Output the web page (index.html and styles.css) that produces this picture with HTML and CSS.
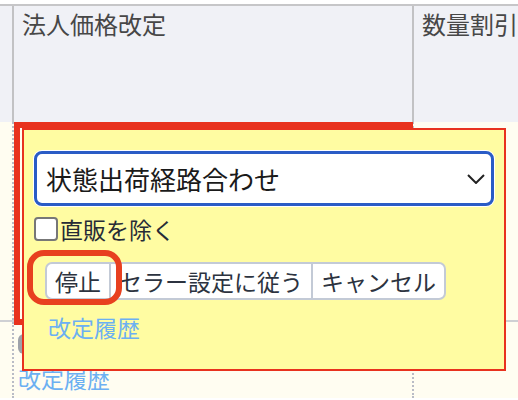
FILE: index.html
```html
<!DOCTYPE html>
<html lang="ja">
<head>
    <meta charset="UTF-8">
    <meta name="viewport" content="width=device-width, initial-scale=1.0">
    <title>法人価格改定</title>
    <link rel="stylesheet" href="styles.css">
</head>
<body>
    <div class="sheet">
        <div class="row head">
            <div class="cell gutter"></div>
            <div class="cell col-a">法人価格改定</div>
            <div class="cell col-b">数量割引</div>
        </div>
        <div class="row body first">
            <div class="cell gutter"></div>
            <div class="cell col-a"></div>
            <div class="cell col-b"></div>
        </div>
        <div class="row body last">
            <div class="cell gutter"></div>
            <div class="cell col-a">
                <span class="ghost-btn"></span>
                <a class="history under">改定履歴</a>
            </div>
            <div class="cell col-b"></div>
        </div>
    </div>

    <div class="mark-cell"></div>

    <div class="popup">
        <div class="picker">
            <span>状態出荷経路合わせ</span>
            <svg class="chevron" width="18" height="10" viewBox="0 0 18 10">
                <path d="M1 1 L9 9 L17 1" fill="none" stroke="#222" stroke-width="2"/>
            </svg>
        </div>
        <label class="check">
            <span class="box"></span>直販を除く
        </label>
        <div class="btn-group">
            <button class="btn first">停止<span class="mark-btn"></span></button>
            <button class="btn">セラー設定に従う</button>
            <button class="btn last">キャンセル</button>
        </div>
        <a class="history">改定履歴</a>
    </div>
</body>
</html>
```

FILE: styles.css
```css
body {
    margin: 0;
    background: #ffffff;
    font-family: "Noto Sans CJK JP", "Noto Sans", sans-serif;
    overflow: hidden;
}
.sheet {
    margin-top: 4px;
}
.row {
    display: grid;
    grid-template-columns: 12px 400px 1fr;
}
.head {
    height: 116px;
    background: #f0f1f6;
    border-top: 2px solid #c6c6c8;
}
.head .col-a, .head .col-b {
    border-left: 2px solid #c2c2c4;
    padding: 2px 0 0 8px;
    font-size: 24px;
    line-height: 32px;
    color: #474747;
}
.body {
    background: #fffdf1;
    height: 198px;
}
.body.first {
    border-bottom: 2px solid #cfd0d4;
}
.body.last {
    height: 76px;
}
.body .col-a, .body .col-b {
    border-left: 2px dotted #b9bcc6;
}
.ghost-btn {
    display: block;
    width: 60px;
    height: 20px;
    margin: 12px 0 0 4px;
    background: #9ea2aa;
    border-radius: 6px;
}
.history {
    display: block;
    font-size: 23px;
    line-height: 30px;
    color: #6cb0f2;
}
.history.under {
    margin: 9px 0 0 4px;
}
.mark-cell {
    position: absolute;
    left: 14px;
    top: 122px;
    width: 387px;
    height: 191px;
    border: 6px solid #e8321e;
}
.popup {
    position: absolute;
    left: 22px;
    top: 128px;
    width: 460px;
    height: 218px;
    padding: 21px 10px 0 10px;
    background: #fffca2;
    border: 2px solid #e8321e;
}
.picker {
    display: flex;
    align-items: center;
    justify-content: space-between;
    height: 55px;
    width: 460px;
    padding: 0 0 0 9px;
    box-sizing: border-box;
    background: #ffffff;
    border: 3px solid #2a5cc6;
    border-radius: 8px;
    box-shadow: 0 0 0 1px #ffffff;
    font-size: 26px;
    color: #1a1a1a;
}
.chevron {
    margin-right: 6px;
}
.check {
    display: flex;
    align-items: center;
    margin-top: 9px;
    font-size: 23px;
    line-height: 28px;
    color: #262b36;
}
.box {
    width: 20px;
    height: 20px;
    margin-right: 2px;
    border: 2px solid #777777;
    border-radius: 4px;
    background: #ffffff;
}
.btn-group {
    display: flex;
    margin: 19px 0 0 11px;
}
.btn {
    position: relative;
    height: 38px;
    padding: 0 8px;
    font-family: inherit;
    font-size: 23px;
    color: #2c3340;
    background: #ffffff;
    border: 2px solid #c3cad6;
    border-left-width: 0;
}
.btn.first {
    border-left-width: 2px;
    border-radius: 7px 0 0 7px;
}
.btn.last {
    border-radius: 0 7px 7px 0;
}
.mark-btn {
    position: absolute;
    z-index: 1;
    left: -20px;
    top: -14px;
    width: 83px;
    height: 43px;
    border: 6px solid #e8401f;
    border-radius: 17px;
}
.popup .history {
    margin: 12px 0 0 14px;
}
```
